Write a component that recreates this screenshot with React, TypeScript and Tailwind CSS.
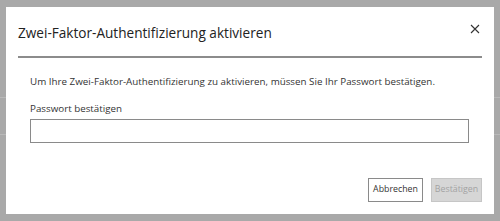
import React from "react";

export default function App() {
  return (
    <div
      className="relative w-[500px] h-[221px] overflow-hidden bg-[#a9a9a9]"
      style={{ fontFamily: '"Open Sans", "Noto Sans", sans-serif' }}
    >
      {/* underlying page (dimmed) */}
      <div className="flex flex-col">
        <div className="h-[98px] border-b border-[#b9b9b9]" />
        <div className="h-[37px] border-b border-[#b9b9b9]" />
      </div>

      {/* modal */}
      <div className="absolute left-[6px] top-[7px] w-[488px] h-[207px] bg-white flex flex-col">
        <div className="flex items-center justify-between pl-[12px] pr-[14px] pt-[16px] pb-[13px]">
          <h2 className="text-[13.6px] leading-[20px] text-[#222]">
            Zwei-Faktor-Authentifizierung aktivieren
          </h2>
          <svg width="10" height="10" viewBox="0 0 10 10" className="mt-[-9px]">
            <path d="M1 1 L9 9 M9 1 L1 9" stroke="#333" strokeWidth="1.1" fill="none" />
          </svg>
        </div>
        <div className="mx-[12px] h-[2px] bg-[#8c8c8c]" />
        <div className="px-[24px] pt-[16px] flex flex-col">
          <p className="text-[9.8px] leading-[16px] text-[#333] whitespace-nowrap">
            Um Ihre Zwei-Faktor-Authentifizierung zu aktivieren, müssen Sie Ihr Passwort bestätigen.
          </p>
          <label className="mt-[11px] text-[9.8px] leading-[16px] text-[#333]">
            Passwort bestätigen
          </label>
          <input
            type="password"
            className="mt-[2px] w-[439px] h-[24px] border border-[#8a8a8a] outline-none"
          />
        </div>
        <div className="mt-auto flex justify-end gap-[8px] pr-[12px] pb-[12px]">
          <button className="w-[55px] h-[24px] border border-[#8a8a8a] bg-white text-[8.8px] text-[#333]">
            Abbrechen
          </button>
          <button className="w-[51px] h-[24px] border border-[#c6c6c6] bg-[#d6d6d6] text-[8.8px] text-[#a3a3a3]">
            Bestätigen
          </button>
        </div>
      </div>
    </div>
  );
}
